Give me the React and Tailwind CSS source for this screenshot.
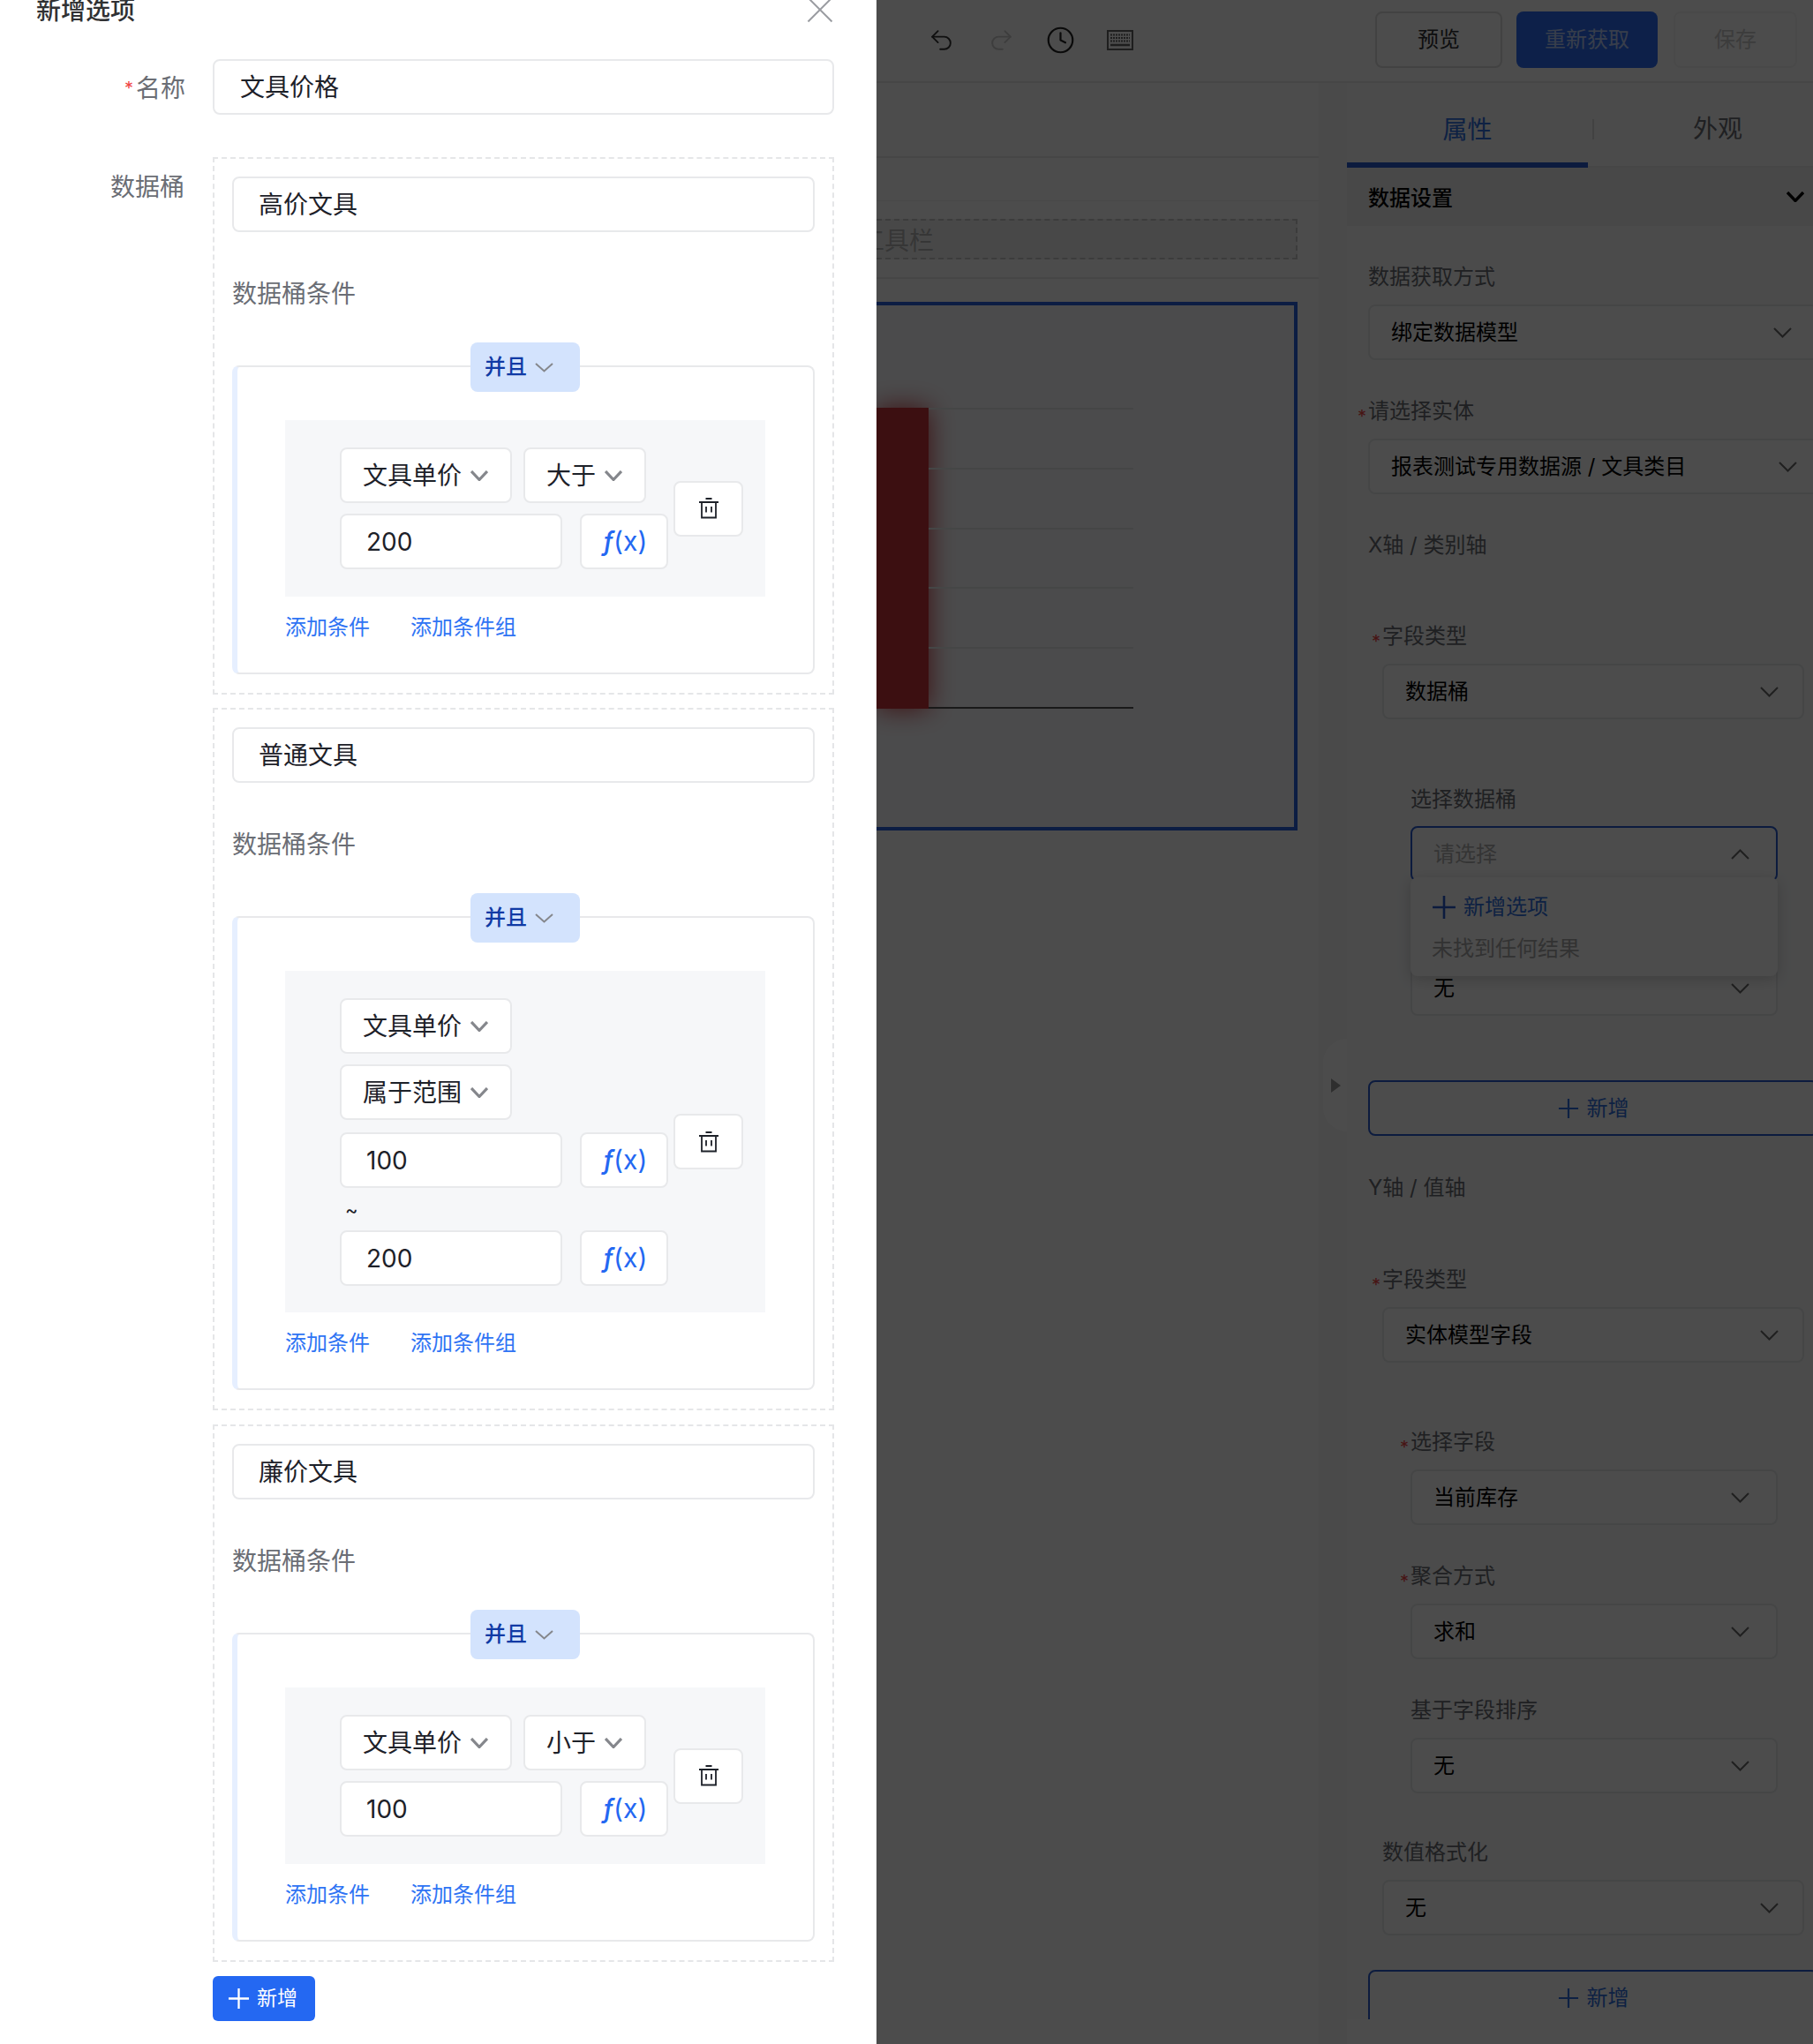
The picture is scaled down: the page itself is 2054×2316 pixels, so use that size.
import React from "react";
import { Undo2, Redo2, Clock } from "lucide-react";

const Chev = ({ w = 20, h = 11, sw = 2, color = "#85878c", up = false, className = "" }) => (
  <svg width={w} height={h} viewBox={`0 0 ${w} ${h}`} fill="none" className={`shrink-0 ${className}`}>
    <polyline
      points={up ? `1,${h - 1} ${w / 2},1.5 ${w - 1},${h - 1}` : `1,1 ${w / 2},${h - 1.5} ${w - 1},1`}
      stroke={color}
      strokeWidth={sw}
    />
  </svg>
);

const Plus = ({ size = 26, color = "#fff", sw = 2.5 }) => (
  <svg width={size} height={size} viewBox="0 0 26 26" fill="none" className="shrink-0">
    <path d="M13 1v24M1 13h24" stroke={color} strokeWidth={sw} />
  </svg>
);

const Trash = () => (
  <svg width="22" height="24" viewBox="0 0 22 24" fill="none">
    <path d="M7.5 1h7M0 5h22M3 5v17.5h16V5" stroke="#1d2129" strokeWidth="1.8" />
    <path d="M8 10v6.5M14 10v6.5" stroke="#1d2129" strokeWidth="1.8" />
  </svg>
);

const Keyboard = () => (
  <svg width="30" height="23" viewBox="0 0 30 23" fill="none">
    <rect x="1" y="1" width="28" height="21" stroke="#666" strokeWidth="2" />
    <path d="M4 5.5h22M4 9h22M4 12.5h22" stroke="#666" strokeWidth="2" strokeDasharray="2 1" />
    <path d="M4 17h22" stroke="#666" strokeWidth="2.5" />
  </svg>
);

const Control = ({ className = "", children }) => (
  <div className={`h-[63px] bg-white border-2 border-[#e8e9eb] rounded-lg flex items-center ${className}`}>
    {children}
  </div>
);

const CondSelect = ({ text, w }) => (
  <Control className={`${w} pl-[24px] shrink-0`}>
    <span className="text-[28px] text-[#1d2129] whitespace-nowrap">{text}</span>
    <Chev color="#85878c" sw={3.2} w={20} h={12} className="ml-[10px]" />
  </Control>
);

const Fx = () => (
  <Control className="w-[100px] ml-[20px] pl-[2px] justify-center shrink-0">
    <span className="text-[30px] text-[#2468f2] leading-none -mt-[2px]">
      <span className="italic font-medium">ƒ</span>(x)
    </span>
  </Control>
);

const ValueRow = ({ value }) => (
  <div className="flex">
    <Control className="w-[252px] pl-[28px] shrink-0">
      <span className="text-[28px] text-[#1d2129]">{value}</span>
    </Control>
    <Fx />
  </div>
);

const BucketBox = ({ name, children, className = "" }) => (
  <div className={`border-2 border-dashed border-[#e5e6e8] px-[20px] pt-[20px] pb-[21px] ${className}`}>
    <Control className="pl-[28px]">
      <span className="text-[28px] text-[#1d2129]">{name}</span>
    </Control>
    <div className="mt-[50px] h-[40px] leading-[40px] text-[28px] text-[#6b6e75]">数据桶条件</div>
    <div className="relative mt-[61px] bg-white border-2 border-l-[6px] border-[#e8e9eb] border-l-[#e6efff] rounded-lg pt-[60px] pl-[54px] pr-[54px] pb-[34px]">
      <div className="absolute -top-[28px] left-[264px] w-[124px] h-[56px] bg-[#d3e3fd] rounded-lg flex items-center pl-[16px]">
        <span className="text-[24px] text-[#0f3aa5] font-medium">并且</span>
        <Chev color="#85878c" w={21} h={11} sw={2} className="ml-[9px]" />
      </div>
      <div className="bg-[#f6f7f9] pl-[62px] pr-[25px] flex items-center">
        <div className="flex-1 min-w-0">{children}</div>
        <div className="w-[79px] h-[63px] bg-white border-2 border-[#e8e9eb] rounded-lg flex items-center justify-center shrink-0 ml-[7px]">
          <Trash />
        </div>
      </div>
      <div className="mt-[18px] h-[34px] flex gap-[46px] text-[24px] leading-[34px] text-[#2f74f4]">
        <span>添加条件</span>
        <span>添加条件组</span>
      </div>
    </div>
  </div>
);

const RLabel = ({ text, star, className = "" }) => (
  <div className={`relative h-[34px] pt-[2px] leading-[34px] text-[24px] text-[#6a6d73] whitespace-nowrap ${className}`}>
    {star && <span className="absolute -left-[12px] top-[8px] text-[#ef4444] text-[20px] leading-[34px]">*</span>}
    {text}
  </div>
);

const RSelect = ({ text, right = "pr-[27px]", className = "" }) => (
  <div className={`mt-[16px] h-[63px] bg-white border-2 border-[#e8e9eb] rounded-lg flex items-center justify-between pl-[24px] ${right} ${className}`}>
    <span className="text-[24px] text-black whitespace-nowrap">{text}</span>
    <Chev color="#6b6b6b" w={21} h={12} sw={2} />
  </div>
);

const AddButton = ({ className = "" }) => (
  <div className={`w-[510px] h-[63px] border-2 border-[#2a5cd0] rounded-lg flex items-center justify-center gap-[9px] bg-white ${className}`}>
    <Plus size={24} color="#2f6fe0" sw={2.4} />
    <span className="text-[24px] text-[#2f6fe0]">新增</span>
  </div>
);

const Notch = () => (
  <div className="absolute -top-[15px] left-[20px] w-[28px] h-[28px] rotate-45 bg-[#fafbfc]" />
);

export default function App() {
  return (
    <div className="relative w-[2054px] h-[2316px] overflow-hidden bg-white flex [font-family:Inter,'Noto_Sans_CJK_SC',sans-serif]">
      {/* drawer */}
      <div className="relative z-20 w-[993px] shrink-0 bg-white h-[2316px] overflow-hidden">
        <div className="-mt-[8px] h-[40px] flex items-center justify-between pl-[41px] pr-[49px]">
          <span className="text-[28px] leading-[40px] font-medium text-[#303133]">新增选项</span>
          <svg width="30" height="30" viewBox="0 0 30 30" fill="none" className="-mt-[2px]">
            <path d="M1.5 1.5l27 27M28.5 1.5l-27 27" stroke="#9a9ca1" strokeWidth="2" />
          </svg>
        </div>
        <div className="pl-[241px] pr-[48px]">
          <div className="relative mt-[35px]">
            <div className="absolute -left-[87px] top-[13px] h-[40px] leading-[40px] text-[28px] text-[#6b6e75] whitespace-nowrap">
              <span className="absolute -left-[13px] top-0 text-[20px] text-[#ef4444]">*</span>
              名称
            </div>
            <Control className="pl-[29px]">
              <span className="text-[28px] text-[#1d2129]">文具价格</span>
            </Control>
          </div>
          <div className="relative mt-[48px]">
            <div className="absolute -left-[116px] top-[14px] h-[40px] leading-[40px] text-[28px] text-[#6b6e75] whitespace-nowrap">数据桶</div>
            <BucketBox name="高价文具">
              <div className="py-[31px]">
                <div className="flex gap-[13px]">
                  <CondSelect text="文具单价" w="w-[195px]" />
                  <CondSelect text="大于" w="w-[139px]" />
                </div>
                <div className="mt-[12px]"><ValueRow value="200" /></div>
              </div>
            </BucketBox>
            <BucketBox name="普通文具" className="mt-[15px]">
              <div className="pt-[31px] pb-[30px]">
                <CondSelect text="文具单价" w="w-[195px]" />
                <div className="mt-[12px]"><CondSelect text="属于范围" w="w-[195px]" /></div>
                <div className="mt-[14px]"><ValueRow value="100" /></div>
                <div className="h-[48px] pl-[6px] pt-[9px] text-[22px] leading-[32px] text-[#1d2129]">~</div>
                <ValueRow value="200" />
              </div>
            </BucketBox>
            <BucketBox name="廉价文具" className="mt-[16px]">
              <div className="py-[31px]">
                <div className="flex gap-[13px]">
                  <CondSelect text="文具单价" w="w-[195px]" />
                  <CondSelect text="小于" w="w-[139px]" />
                </div>
                <div className="mt-[12px]"><ValueRow value="100" /></div>
              </div>
            </BucketBox>
            <div className="mt-[16px] w-[116px] h-[51px] bg-[#2468f2] rounded-md flex items-center pl-[17px] gap-[8px]">
              <Plus size={25} color="#fff" sw={2.4} />
              <span className="text-[23px] text-white">新增</span>
            </div>
          </div>
        </div>
      </div>

      {/* page behind the mask */}
      <div className="w-[1061px] h-[2316px] shrink-0 bg-white">
        <div className="h-[94px] pb-[2px] border-b-2 border-[#ececec] flex items-center">
          <div className="flex items-center pl-[58px]">
            <Undo2 size={31} strokeWidth={1.5} color="#333" />
            <Redo2 size={31} strokeWidth={1.5} color="#ccc" className="ml-[37px]" />
            <Clock size={33} strokeWidth={1.6} color="#222" className="ml-[35px]" />
            <span className="ml-[36px] flex"><Keyboard /></span>
          </div>
          <div className="ml-auto flex items-center pr-[18px]">
            <div className="w-[144px] h-[64px] border-2 border-[#dcdcdc] rounded-lg flex items-center justify-center text-[24px] text-[#303133]">预览</div>
            <div className="ml-[16px] w-[160px] h-[64px] bg-[#2c6cf5] rounded-lg flex items-center justify-center text-[24px] text-white/70">重新获取</div>
            <div className="ml-[18px] w-[140px] h-[64px] border-2 border-[#f6f6f6] rounded-lg flex items-center justify-center text-[24px] text-[#c8c8c8]">保存</div>
          </div>
        </div>
        <div className="flex h-[2222px]">
          {/* canvas */}
          <div className="w-[533px] shrink-0 bg-[#f7f7f7] flex">
            <div className="w-[501px] shrink-0 bg-white">
              <div className="h-[85px] border-b-2 border-[#ececec]" />
              <div className="h-[49px] border-b border-[#f0f0f0]" />
              <div className="h-[88px] border-b-2 border-[#ececec] pr-[24px] pt-[20px]">
                <div className="h-[46px] border-2 border-l-0 border-dashed border-[#c8c8c8] bg-[#f2f2f2] text-[28px] leading-[46px] text-[#b5b5b5] overflow-hidden whitespace-nowrap">
                  <span className="-ml-[19px] inline-block">工具栏</span>
                </div>
              </div>
              <div className="mt-[26px] mr-[24px] h-[599px] border-4 border-l-0 border-[#2a63e0] bg-[#fbfcff] pt-[116px]">
                <div className="flex">
                  <div className="w-[59px] h-[341px] bg-[#c83239] shadow-[0_0_30px_#c83239] shrink-0" />
                  <div className="relative w-[232px] h-[341px] flex flex-col justify-between">
                    <div className="h-[2px] bg-[#e8e9ec]" />
                    <div className="h-[2px] bg-[#e8e9ec]" />
                    <div className="h-[2px] bg-[#e8e9ec]" />
                    <div className="h-[2px] bg-[#e8e9ec]" />
                    <div className="h-[2px] bg-[#e8e9ec]" />
                    <div className="h-[2px] bg-[#555]" />
                  </div>
                </div>
              </div>
            </div>
            <div className="relative flex-1">
              <div className="absolute top-[1083px] right-0 w-[27px] h-[105px] bg-white rounded-l-[28px] flex items-center pl-[9px]">
                <svg width="11" height="16" viewBox="0 0 11 16"><path d="M0 0l11 8-11 8z" fill="#9a9a9a" /></svg>
              </div>
            </div>
          </div>

          {/* right panel */}
          <div className="w-[528px] shrink-0 h-[2194px] overflow-hidden bg-[#fcfcfc]">
            <div className="h-[96px] border-b-2 border-[#ececec] relative flex">
              <div className="w-[273px] h-[96px] pt-[16px] border-b-[6px] border-[#2a5cd0] flex items-center justify-center text-[28px] text-[#2f6fe0] shrink-0">属性</div>
              <div className="w-[2px] h-[23px] bg-[#dcdcdc] mt-[41px] ml-[5px] shrink-0" />
              <div className="flex-1 flex items-center justify-center pt-[10px] pl-[32px] text-[28px] text-[#6a6d73]">外观</div>
            </div>
            <div className="h-[66px] bg-[#f2f2f2] flex items-center justify-between pl-[24px] pr-[10px]">
              <span className="text-[24px] pt-[3px] font-medium text-black">数据设置</span>
              <Chev color="#000" w={20} h={12} sw={3.4} />
            </div>
            <div className="pl-[24px] w-[534px] pt-[39px]">
              <RLabel text="数据获取方式" />
              <RSelect text="绑定数据模型" right="pr-[28px]" />
              <RLabel text="请选择实体" star className="mt-[39px]" />
              <RSelect text="报表测试专用数据源 / 文具类目" right="pr-[22px]" />
              <RLabel text="X轴 / 类别轴" className="mt-[39px]" />

              <div className="relative mt-[30px] w-[512px] bg-[#fafbfc] pl-[16px] pr-[18px] pt-[39px] pb-[36px]">
                <Notch />
                <div className="relative">
                  <RLabel text="字段类型" star />
                  <RSelect text="数据桶" />
                  <div className="pl-[32px] pr-[30px] pt-[72px]">
                    <RLabel text="选择数据桶" />
                    <div className="relative mt-[15px] z-10">
                      <div className="h-[63px] border-2 border-[#2a5cd0] rounded-lg flex items-center justify-between pl-[24px] pr-[30px] bg-white">
                        <span className="text-[24px] text-[#b0b0b0]">请选择</span>
                        <Chev color="#6b6b6b" w={21} h={12} sw={2} up />
                      </div>
                      <div className="absolute top-[58px] left-0 right-0 h-[112px] bg-white rounded-lg shadow-[0_4px_16px_rgba(0,0,0,0.18)] pl-[24px] pt-[15px]">
                        <div className="flex items-center h-[36px] gap-[8px] pt-[2px]">
                          <Plus size={28} color="#2a5cd0" sw={2.4} />
                          <span className="text-[24px] text-[#2f6fe0]">新增选项</span>
                        </div>
                        <div className="text-[24px] leading-[34px] mt-[13px] text-[#a8a8a8]">未找到任何结果</div>
                      </div>
                    </div>
                    <RLabel text="基于字段排序" className="mt-[39px]" />
                    <RSelect text="无" right="pr-[30px]" />
                  </div>
                </div>
              </div>
              <AddButton className="mt-[37px]" />
              <RLabel text="Y轴 / 值轴" className="mt-[40px]" />

              <div className="relative mt-[30px] w-[512px] bg-[#fafbfc] pl-[16px] pr-[18px] pt-[40px] pb-[23px]">
                <Notch />
                <div className="relative">
                  <RLabel text="字段类型" star />
                  <RSelect text="实体模型字段" />
                  <div className="pl-[32px] pr-[30px] pt-[71px]">
                    <RLabel text="选择字段" star />
                    <RSelect text="当前库存" right="pr-[30px]" />
                    <RLabel text="聚合方式" star className="mt-[39px]" />
                    <RSelect text="求和" right="pr-[30px]" />
                    <RLabel text="基于字段排序" className="mt-[39px]" />
                    <RSelect text="无" right="pr-[30px]" />
                  </div>
                  <RLabel text="数值格式化" className="mt-[48px]" />
                  <RSelect text="无" />
                </div>
              </div>
              <AddButton className="mt-[16px]" />
            </div>
          </div>
        </div>
      </div>

      {/* mask */}
      <div className="absolute inset-0 z-10 bg-black/70" />
    </div>
  );
}
